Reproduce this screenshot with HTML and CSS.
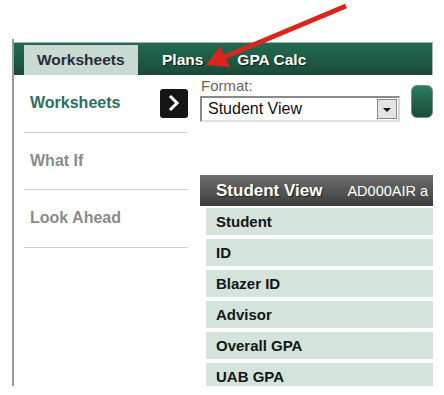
FILE: index.html
```html
<!DOCTYPE html>
<html lang="en">
<head>
  <meta charset="UTF-8">
  <title>Degree Works</title>
  <link rel="stylesheet" href="styles.css">
</head>
<body>

  <svg class="pointer" width="444" height="80" viewBox="0 0 444 80">
    <line x1="346" y1="6" x2="222" y2="58" stroke="#d8261d" stroke-width="5"/>
    <polygon points="206,65 230,67 220,46" fill="#d8261d"/>
  </svg>

  <div class="frame">
    <div class="tabbar">
      <a class="tab active" href="#">Worksheets</a>
      <a class="tab" href="#">Plans</a>
      <a class="tab" href="#">GPA Calc</a>
    </div>

    <div class="main">
      <div class="sidebar">
        <div class="side-item">
          <a class="side-link current" href="#">Worksheets</a>
          <button class="toggle-btn">
            <svg width="14" height="18" viewBox="0 0 14 18"><polyline points="3,2 10,9 3,16" fill="none" stroke="#fff" stroke-width="3"/></svg>
          </button>
        </div>
        <div class="side-item"><a class="side-link" href="#">What If</a></div>
        <div class="side-item"><a class="side-link" href="#">Look Ahead</a></div>
      </div>

      <div class="content">
        <div class="format-row">
          <div class="format">
            <label class="format-label">Format:</label>
            <div class="select">
              <span class="select-text">Student View</span>
              <span class="select-arrow"></span>
            </div>
          </div>
          <div class="process-btn"></div>
        </div>

        <div class="sheet">
          <div class="sheet-head">
            <span class="sheet-title">Student View</span>
            <span class="sheet-id">AD000AIR a</span>
          </div>
          <div class="sheet-row">Student</div>
          <div class="sheet-row">ID</div>
          <div class="sheet-row">Blazer ID</div>
          <div class="sheet-row">Advisor</div>
          <div class="sheet-row">Overall GPA</div>
          <div class="sheet-row">UAB GPA</div>
        </div>
      </div>
    </div>
  </div>

</body>
</html>
```

FILE: styles.css
```css
* {
  margin: 0;
  padding: 0;
  box-sizing: border-box;
}

body {
  font-family: 'Liberation Sans', Arial, sans-serif;
  background: #fff;
  width: 444px;
  height: 395px;
  overflow: hidden;
  position: relative;
}

.pointer {
  position: absolute;
  top: 0;
  left: 0;
  z-index: 2;
}

.frame {
  margin-top: 39px;
  margin-left: 12px;
  width: 421px;
  height: 347px;
  border-left: 2px solid #9a9a9a;
  overflow: hidden;
}

.tabbar {
  margin-top: 3px;
  height: 33px;
  display: flex;
  align-items: flex-end;
  padding-left: 10px;
  background: linear-gradient(#226b52, #1a4a38);
  border-top: 1px solid #9fb8ad;
  border-right: 1px solid #a9b5b0;
}

.tab {
  height: 30px;
  display: flex;
  align-items: center;
  padding: 0 12px 0 13px;
  font-size: 15.5px;
  font-weight: bold;
  color: #fff;
  text-decoration: none;
  text-shadow: 1px 1px 1px #0c2219;
}

.tab.active {
  width: 114px;
  background: #c8dad2;
  color: #2a2a3a;
  text-shadow: none;
  margin-right: 11px;
}

.tab + .tab {
  margin-right: 9px;
}

.main {
  display: flex;
}

.sidebar {
  width: 164px;
  margin-left: 10px;
}

.side-item {
  height: 57.5px;
  display: flex;
  align-items: center;
  justify-content: space-between;
  padding-left: 6px;
  border-bottom: 1px solid #cfcfcf;
}

.side-link {
  font-size: 16px;
  font-weight: bold;
  color: #8b8b8b;
  text-decoration: none;
}

.side-link.current {
  color: #2d6e5e;
}

.toggle-btn {
  width: 28px;
  height: 29px;
  background: #151515;
  border: none;
  border-radius: 3px;
  display: flex;
  align-items: center;
  justify-content: center;
}

.content {
  margin-left: 12px;
  flex: 1;
  overflow: hidden;
}

.format-row {
  display: flex;
  align-items: flex-start;
  padding-top: 2px;
  height: 100px;
}

.format-label {
  display: block;
  font-size: 15px;
  color: #6f6456;
  height: 19px;
  padding-left: 1px;
}

.select {
  width: 200px;
  height: 26px;
  border: 2px solid #8a8a8a;
  border-right-color: #d8d8d8;
  border-bottom-color: #e0e0e0;
  display: flex;
  align-items: center;
  justify-content: space-between;
  padding-left: 6px;
  padding-right: 1px;
}

.select-text {
  font-size: 16px;
  color: #111;
}

.select-arrow {
  width: 20px;
  height: 20px;
  background: #e4e4e4;
  border: 1px solid #888;
  position: relative;
}

.select-arrow::after {
  content: "";
  position: absolute;
  left: 5px;
  top: 8px;
  border-left: 4px solid transparent;
  border-right: 4px solid transparent;
  border-top: 4px solid #111;
}

.process-btn {
  margin-left: 11px;
  margin-top: 8px;
  width: 60px;
  height: 33px;
  border-radius: 6px;
  background: linear-gradient(#2a7d5f, #1b4b39);
  border: 1px solid #7a8a84;
}

.sheet-head {
  height: 31px;
  display: flex;
  align-items: center;
  padding-left: 16px;
  background: linear-gradient(#6e6e6e, #3d3d3d);
  color: #fff;
  white-space: nowrap;
  margin-right: -1px;
}

.sheet-title {
  font-size: 17px;
  font-weight: bold;
  margin-right: 25px;
  text-shadow: 1px 1px 1px #222;
}

.sheet-id {
  font-size: 14.5px;
}

.sheet-row {
  margin: 2px 0 4px 6px;
  height: 27px;
  display: flex;
  align-items: center;
  padding-left: 10px;
  background: #d4e4dd;
  font-size: 15px;
  font-weight: bold;
  color: #151515;
}

.sheet-row + .sheet-row {
  margin-top: 0;
}
```
